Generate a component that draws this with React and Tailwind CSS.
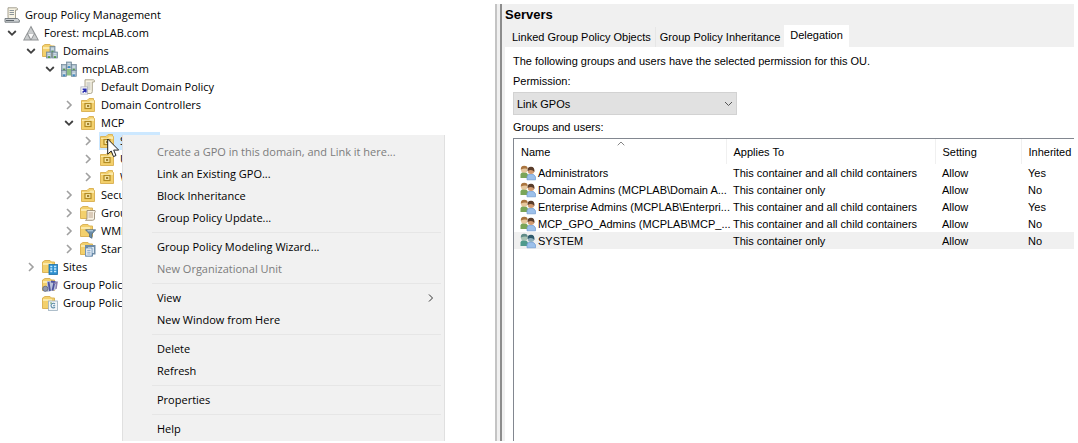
import React from "react";

function Folder({ children, wide }) {
  return (
    <svg width="16" height="16" viewBox="0 0 16 16" className="shrink-0">
      <path d={wide ? "M0.5 3L3 1.5H8L9.5 3H12.5V13.5H0.5Z" : "M1.5 3.5H7L9 1.5H13.5V3L14.5 3.5V14.5H1.5Z"} fill="#f3d06c" stroke="#dcb458" />
      <path d={wide ? "M1 4H10V6H1Z" : "M2 5H9L10.5 3.5H14V6H2Z"} fill="#fbe9a9" />
      {children}
    </svg>
  );
}

function Building({ x, y, color }) {
  return (
    <g>
      <rect x={x} y={y} width="5" height="6" fill="#9fb4c4" stroke="#6d8596" strokeWidth="0.7" />
      <path d={`M${x + 1} ${y + 1.7}h3M${x + 1} ${y + 3.3}h3`} stroke="#e9f2f8" strokeWidth="0.8" />
      <rect x={x + 1.5} y={y + 4.2} width="2" height="1.8" fill={color} />
    </g>
  );
}

function Icon({ name }) {
  if (name === "console")
    return (
      <svg width="16" height="16" viewBox="0 0 16 16" className="shrink-0">
        <path d="M4 0.8H12.5Q14 1 13.3 3H11.5V12H3.5Q4.5 11 4 9Z" fill="#f7f3e3" stroke="#9b9686" strokeWidth="0.9" />
        <path d="M5.5 3.5H10M5.5 5.5H10M5.5 7.5H10" stroke="#7f8a94" strokeWidth="0.9" />
        <path d="M1 11.5H13.5L15.3 13V15.2H1Z" fill="#cfd3d6" stroke="#71777c" strokeWidth="0.9" />
        <path d="M2 13.5H10" stroke="#5e656b" />
      </svg>
    );
  if (name === "forest")
    return (
      <svg width="16" height="16" viewBox="0 0 16 16" className="shrink-0">
        <path d="M8 0.5L16 15.5H0Z" fill="#8f9294" />
        <path d="M7.8 2.5L10.8 8H5ZM4.2 9.2L7 14.5H1.5ZM11.5 9.2L14.5 14.5H8.7Z" fill="#c9cccd" />
        <path d="M5 8.4H11L8 14Z" fill="#f8f8f8" />
      </svg>
    );
  if (name === "domains")
    return (
      <Folder wide>
        <Building x={8} y={3.5} color="#569c47" />
        <Building x={4.5} y={9} color="#569c47" />
        <Building x={10.5} y={9} color="#569c47" />
      </Folder>
    );
  if (name === "domain")
    return (
      <svg width="16" height="16" viewBox="0 0 16 16" className="shrink-0">
        <rect x="3" y="8" width="10" height="6.5" fill="#8fbf83" />
        <Building x={5.5} y={1} color="#3c8bc6" />
        <Building x={0.6} y={3.5} color="#569c47" />
        <Building x={10.3} y={3.5} color="#569c47" />
        <Building x={0.6} y={9.3} color="#3c8bc6" />
        <Building x={10.3} y={9.3} color="#3c8bc6" />
      </svg>
    );
  if (name === "gpo")
    return (
      <svg width="16" height="16" viewBox="0 0 16 16" className="shrink-0">
        <path d="M5 0.8H13.5Q15 1 14.3 3H12.3V12.5Q12.3 14.5 10.5 14.5H3Q5 13.5 5 12Z" fill="#f7f3e3" stroke="#a49d86" strokeWidth="0.9" />
        <path d="M6.5 4H10.5M6.5 6H10.5M6.5 8H10.5M6.5 10H10.5" stroke="#a9b2b8" strokeWidth="0.9" />
        <rect x="0.9" y="7.9" width="6.7" height="7.2" fill="#fff" stroke="#a6a9b8" strokeWidth="0.8" />
        <path d="M2.6 13.5L5.5 10.6M2.6 10.2H5.9V13.5" fill="none" stroke="#2a2fae" strokeWidth="1.5" />
      </svg>
    );
  if (name === "ou")
    return (
      <Folder>
        <rect x="5" y="6.5" width="6" height="5" fill="#f8e7a6" stroke="#b18a22" strokeWidth="1.2" />
        <path d="M7 9H9.2" stroke="#8d6812" strokeWidth="1.6" />
      </Folder>
    );
  if (name === "objects")
    return (
      <Folder wide>
        <path d="M7 5.5H15Q15.8 6.5 14.5 8V14Q14 15.3 12.5 15.3H5.5Q7.5 14.3 7 12Z" fill="#f7f1e4" stroke="#9a8d78" strokeWidth="0.9" />
        <path d="M8.5 8H13M8.5 10H13M8.5 12H13" stroke="#b79e86" strokeWidth="0.9" />
      </Folder>
    );
  if (name === "filter")
    return (
      <Folder wide>
        <path d="M5.5 6.8H15.7L12 11V15.3L9.5 14V11Z" fill="#6b8da8" stroke="#49667e" strokeWidth="0.7" />
        <path d="M7.5 7.8H13" stroke="#c7dceb" />
      </Folder>
    );
  if (name === "starter")
    return (
      <Folder wide>
        <path d="M5 4H15.5V13.5H13V15.5H5Z" fill="#6f8ca6" />
        <path d="M8 6H14V12H8Z" fill="#dbe8f2" />
        <path d="M5.7 7H12V15H5.7Z" fill="#f4f8fb" stroke="#5d87b0" strokeWidth="0.8" />
        <path d="M7.2 9.3H10.6M7.2 11.2H10.6M7.2 13H10.6" stroke="#6c93bd" strokeWidth="0.9" />
      </Folder>
    );
  if (name === "sites")
    return (
      <Folder wide>
        <rect x="7" y="5.5" width="8.5" height="10" fill="#2f8fcf" stroke="#1d6fa8" strokeWidth="0.8" />
        <path d="M8.3 7.5H10.3M12 7.5H14.3M8.3 10H10.3M12 10H14.3M8.3 12.5H10.3M12 12.5H14.3" stroke="#c4ebff" strokeWidth="1.3" />
      </Folder>
    );
  if (name === "modeling")
    return (
      <Folder wide>
        <path d="M5 4H15.5L13.5 13L5 15Z" fill="#b9c2da" />
        <circle cx="3.3" cy="11.8" r="2.6" fill="#8f97ad" stroke="#5c6480" strokeWidth="0.8" />
        <path d="M6.5 5L8 14M9 4.5L12.5 5L10.5 13.5" fill="none" stroke="#4e529f" strokeWidth="1.8" />
        <path d="M12 6.5L15 5.5L14 12" fill="none" stroke="#8b7fae" strokeWidth="1.4" />
      </Folder>
    );
  return (
    <Folder wide>
      <rect x="6.5" y="6" width="9" height="9.4" fill="#f2f6f8" stroke="#9bb0bd" strokeWidth="0.8" />
      <path d="M13 9A2.3 2.3 0 1 0 13 12.2M11 10.8H13.2" fill="none" stroke="#5b8ba8" strokeWidth="1.1" />
      <path d="M8 8H10" stroke="#6aa06a" />
    </Folder>
  );
}

const tree = [
  [0, "", "console", "Group Policy Management"],
  [1, "open", "forest", "Forest: mcpLAB.com"],
  [2, "open", "domains", "Domains"],
  [3, "open", "domain", "mcpLAB.com"],
  [4, "", "gpo", "Default Domain Policy"],
  [4, "closed", "ou", "Domain Controllers"],
  [4, "open", "ou", "MCP"],
  [5, "closed", "ou", "S", true],
  [5, "closed", "ou", "U"],
  [5, "closed", "ou", "W"],
  [4, "closed", "ou", "Secu"],
  [4, "closed", "objects", "Grou"],
  [4, "closed", "filter", "WMI"],
  [4, "closed", "starter", "Start"],
  [2, "closed", "sites", "Sites"],
  [2, "", "modeling", "Group Policy"],
  [2, "", "results", "Group Policy"],
];

const indents = ["pl-1", "pl-1", "pl-[23px]", "pl-[42px]", "pl-[61px]", "pl-[80px]"];

function TreeRow({ item }) {
  const [depth, state, icon, label, selected] = item;
  return (
    <li className={`flex h-[18px] items-center ${indents[depth]}`}>
      {depth > 0 &&
        (state ? (
          <button type="button" aria-label={`Toggle ${label}`} className="mr-1 flex w-[15px] shrink-0 justify-center">
            <svg width="10" height="10" viewBox="0 0 10 10" fill="none">
              {state === "open" ? (
                <path d="M1.2 3L5 6.8L8.8 3" stroke="#404040" strokeWidth="1.8" />
              ) : (
                <path d="M3 1L7 5L3 9" stroke="#a0a0a0" strokeWidth="1.6" />
              )}
            </svg>
          </button>
        ) : (
          <span className="mr-1 w-[15px] shrink-0" />
        ))}
      <a href="#node" className={`flex h-[18px] items-center gap-[5px] whitespace-nowrap ${selected ? "w-[61px] bg-[#cce8ff]" : ""}`}>
        <Icon name={icon} />
        {label}
      </a>
    </li>
  );
}

const menu = [
  ["Create a GPO in this domain, and Link it here...", "Link an Existing GPO...", "Block Inheritance", "Group Policy Update..."],
  ["Group Policy Modeling Wizard...", "New Organizational Unit"],
  ["View", "New Window from Here"],
  ["Delete", "Refresh"],
  ["Properties"],
  ["Help"],
];
const disabledItems = ["Create a GPO in this domain, and Link it here...", "New Organizational Unit"];

function ContextMenu() {
  return (
    <div role="menu" className="absolute top-[135px] left-[122px] w-[323px] border-x border-[#e0e0e0] bg-[#f1f1f1] pt-[6px] pb-px">
      {menu.map((group, g) => (
        <div key={group[0]}>
          {g > 0 && <hr className="my-[3px] mr-[3px] ml-[29px] border-[#e6e6e6]" />}
          {group.map((label) => (
            <button
              key={label}
              type="button"
              role="menuitem"
              disabled={disabledItems.includes(label)}
              className="flex h-[22px] w-full items-center justify-between pr-[9px] pl-[34px] whitespace-nowrap disabled:text-[#7c7c7c]"
            >
              {label}
              {label === "View" && (
                <svg width="8" height="8" viewBox="0 0 8 8" fill="none">
                  <path d="M2 0.5L5.5 4L2 7.5" stroke="#333" />
                </svg>
              )}
            </button>
          ))}
        </div>
      ))}
    </div>
  );
}

function Cursor() {
  return (
    <svg width="13" height="20" viewBox="0 0 13 20" className="absolute top-[138px] left-[107px]">
      <path d="M0.7 1V16.2L4.2 13L6.5 18.6L9 17.5L6.7 12.1H11.7Z" fill="#fff" stroke="#222" />
    </svg>
  );
}

function UsersIcon({ system }) {
  return (
    <svg width="16" height="16" viewBox="0 0 16 16" className="shrink-0">
      <path d="M0.5 13V9.5Q1 7 4 7T8 9.5V13Z" fill={system ? "#4f9a8c" : "#7aa558"} />
      <circle cx="4.2" cy="4.4" r="3.3" fill={system ? "#a9c3b4" : "#e6c79d"} />
      <path d="M0.8 4.6Q0.6 0.8 4.2 0.8T7.6 4Q5 2.5 0.8 4.6Z" fill={system ? "#5f8a86" : "#a9743f"} />
      <path d="M7 14.5V11.5Q7.5 9 11 9T15.6 12V14.8H7Z" fill="#9cc0ea" stroke="#6f9ad0" strokeWidth="0.7" />
      <circle cx="11" cy="5.8" r="3.3" fill={system ? "#8fb0bd" : "#d29a70"} />
      <path d="M7.6 6Q7.2 1.8 11 1.8T14.4 7Q12 3.8 7.6 6Z" fill={system ? "#2f5a6c" : "#5a3d2b"} />
    </svg>
  );
}

const entries = [
  ["Administrators", "This container and all child containers", "Allow", "Yes"],
  ["Domain Admins (MCPLAB\\Domain A...", "This container only", "Allow", "No"],
  ["Enterprise Admins (MCPLAB\\Enterpri...", "This container and all child containers", "Allow", "Yes"],
  ["MCP_GPO_Admins (MCPLAB\\MCP_...", "This container and all child containers", "Allow", "No"],
  ["SYSTEM", "This container only", "Allow", "No"],
];

function Entries() {
  return (
    <div className="grow border-t border-l border-[#828790]">
      <table className="w-full table-fixed border-collapse text-left whitespace-nowrap">
        <colgroup>
          <col className="w-[212px]" />
          <col className="w-[209px]" />
          <col className="w-[86px]" />
          <col />
        </colgroup>
        <thead>
          <tr className="h-[25px]">
            <th className="relative border-r border-[#f0f0f0] p-0 pl-[7px] font-normal">
              <button type="button">Name</button>
              <svg width="8" height="5" viewBox="0 0 8 5" fill="none" className="absolute top-[2px] left-[103px]">
                <path d="M0.7 4.3L4 1L7.3 4.3" stroke="#777" strokeWidth="0.9" />
              </svg>
            </th>
            <th className="border-r border-[#f0f0f0] p-0 pl-[7px] font-normal">Applies To</th>
            <th className="border-r border-[#f0f0f0] p-0 pl-[7px] font-normal">Setting</th>
            <th className="p-0 pl-[7px] font-normal">Inherited</th>
          </tr>
        </thead>
        <tbody>
          {entries.map((row) => (
            <tr key={row[0]} className={`h-[17px] ${row[0] === "SYSTEM" ? "bg-[#f0f0f0]" : ""}`}>
              <td className="p-0 pl-[6px]">
                <div className="flex h-[17px] items-center gap-[2px]">
                  <UsersIcon system={row[0] === "SYSTEM"} />
                  {row[0]}
                </div>
              </td>
              <td className="p-0 pl-[7px]">{row[1]}</td>
              <td className="p-0 pl-[7px]">{row[2]}</td>
              <td className="p-0 pl-[7px]">{row[3]}</td>
            </tr>
          ))}
        </tbody>
      </table>
    </div>
  );
}

function Details() {
  return (
    <main className="mt-1 mr-1 mb-[2px] flex min-w-0 grow flex-col border-l-3 border-[#f0f0f0] font-['Liberation_Sans',Arial,sans-serif] text-[11px] leading-4">
      <header className="bg-[#f0f0f0]">
        <h1 className="pt-[3px] text-[13px] leading-4 font-bold">Servers</h1>
        <div role="tablist" className="flex h-6 items-end">
          <button type="button" role="tab" aria-selected="false" className="h-5 border-r border-[#e6e6e6] pr-1 pl-[7px]">
            Linked Group Policy Objects
          </button>
          <button type="button" role="tab" aria-selected="false" className="h-5 px-1">
            Group Policy Inheritance
          </button>
          <button type="button" role="tab" aria-selected="true" className="h-[22px] bg-white px-[6px] pb-[2px]">
            Delegation
          </button>
        </div>
      </header>
      <section className="flex grow flex-col pl-2">
        <p className="mt-[6px]">The following groups and users have the selected permission for this OU.</p>
        <label htmlFor="permission" className="mt-1">
          Permission:
        </label>
        <div className="mt-[3px] grid w-[224px] items-center">
          <select id="permission" className="col-start-1 row-start-1 h-[23px] appearance-none border border-[#d2d2d2] bg-[#e1e1e1] pl-[3px]">
            <option>Link GPOs</option>
          </select>
          <svg width="9" height="6" viewBox="0 0 9 6" fill="none" className="pointer-events-none col-start-1 row-start-1 mr-1 justify-self-end">
            <path d="M1 1L4.5 4.5L8 1" stroke="#555" />
          </svg>
        </div>
        <h2 className="mt-1 mb-[3px]">Groups and users:</h2>
        <Entries />
      </section>
    </main>
  );
}

export default function App() {
  return (
    <div className="relative flex min-h-screen bg-white text-black">
      <nav className="w-[495px] shrink-0 overflow-hidden pt-[6px] font-['Open_Sans',sans-serif] text-[11px] leading-4">
        <ul>
          {tree.map((item, index) => (
            <TreeRow key={index} item={item} />
          ))}
        </ul>
        <ContextMenu />
        <Cursor />
      </nav>
      <div className="mt-1 mb-[2px] w-[7px] shrink-0 border-r-2 border-l-2 border-r-[#8c8c8c] border-l-[#c4c4c4] bg-[#f0f0f0]" />
      <Details />
    </div>
  );
}
